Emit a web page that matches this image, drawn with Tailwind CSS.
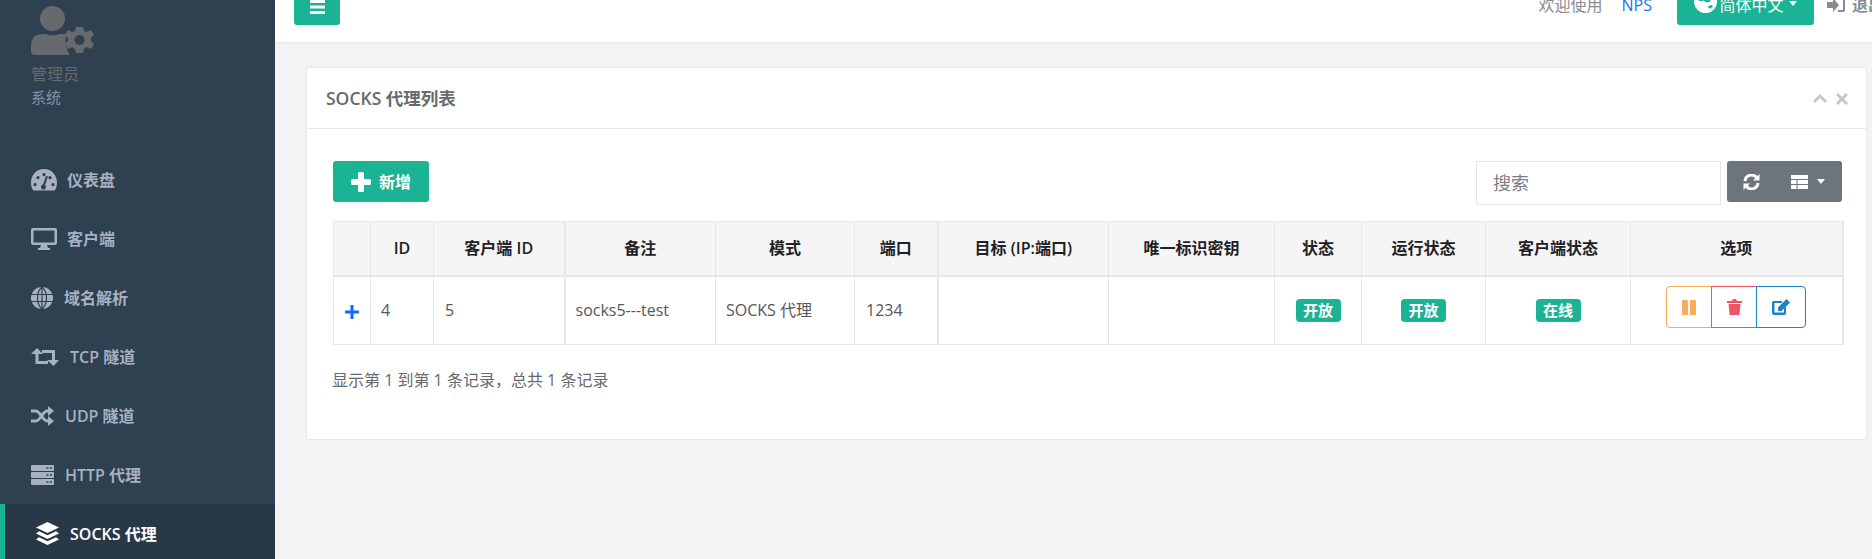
<!DOCTYPE html>
<html lang="zh-CN">
  <head>
    <meta charset="UTF-8" />
    <meta name="viewport" content="width=device-width, initial-scale=1.0" />
    <title>SOCKS 代理列表</title>
    <script src="https://cdn.jsdelivr.net/npm/@tailwindcss/browser@4"></script>
  </head>
  <body class="bg-[#f3f3f3] font-['Open_Sans','Noto_Sans_CJK_SC',sans-serif] text-[16px] text-[#676a6c]">
    <div class="flex h-[559px] overflow-hidden">
      <!-- Sidebar -->
      <aside class="w-[275px] shrink-0 bg-[#2f4050]">
        <div class="pl-[31px] pt-[6px] h-[150px]">
          <svg class="w-[63px] h-[50px]" viewBox="0 0 63 50" fill="#676a6c">
            <circle cx="21.5" cy="12.5" r="12.5" />
            <path d="M4 49q-4 0-4-4v-5q0-12 12-12h3q6 3 13 0h3q3 0 5 1-3 6 0 10l-1 1q1 5 4 9z" />
            <path fill-rule="evenodd" d="M47 19h7l1 4 3 1 4-2 3 5-3 3v3l3 3-3 5-4-2-3 2-1 4h-7l-1-4-3-2-4 2-3-5 3-3v-3l-3-3 3-5 4 2 3-1zM50.500 27a5 5 0 1 0 .01 0z" transform="translate(-2 2)" />
          </svg>
          <div class="mt-[7px] text-[16px] leading-[22px] text-[#676a6c]">管理员</div>
          <div class="mt-[2px] text-[15px] leading-[20px] text-[#8095a8]">系统</div>
        </div>
        <nav class="text-[16px] font-semibold text-[#a7b1c2]">
          <a class="flex items-center h-[59px] pl-[31px]">
            <svg class="w-[26px] h-[22px] mr-[10px]" viewBox="0 0 26 22" fill="#a7b1c2">
              <path fill-rule="evenodd" d="M13 0C5.500 0 0 6 0 13.500c0 3 .7 5.500 2 7.500q.4.600 1 .6h20q.6 0 1-.6c1.300-2 2-4.500 2-7.500C26 6 20.500 0 13 0zM4 14a1.600 1.600 0 1 0 .01 0zM7 7a1.600 1.600 0 1 0 .01 0zM13 4a1.600 1.600 0 1 0 .01 0zM19 7a1.600 1.600 0 1 0 .01 0zM22 14a1.600 1.600 0 1 0 .01 0zM15 7l-3 8.500a2.500 2.500 0 1 0 2 .5l3-8.500z" />
            </svg>
            <span>仪表盘</span>
          </a>
          <a class="flex items-center h-[59px] pl-[31px]">
            <svg class="w-[26px] h-[22px] mr-[10px]" viewBox="0 0 26 22" fill="#a7b1c2">
              <path fill-rule="evenodd" d="M2 0h22q2 0 2 2v13q0 2-2 2h-8l1 3h2v2H7v-2h2l1-3H2q-2 0-2-2V2q0-2 2-2zm.500 2.500v12h21v-12z" />
            </svg>
            <span>客户端</span>
          </a>
          <a class="flex items-center h-[59px] pl-[31px]">
            <svg class="w-[22px] h-[22px] mr-[11px]" viewBox="0 0 22 22">
              <circle cx="11" cy="11" r="11" fill="#a7b1c2" />
              <path d="M0 7.500h22M0 14.500h22M11 0v22M11 0C5 5 5 17 11 22M11 0c6 5 6 17 0 22" fill="none" stroke="#2f4050" stroke-width="1.200" />
            </svg>
            <span>域名解析</span>
          </a>
          <a class="flex items-center h-[59px] pl-[31px]">
            <svg class="w-[28px] h-[18px] mr-[11px]" viewBox="0 0 28 18" fill="none" stroke="#a7b1c2" stroke-width="3">
              <path d="M6 3v11.500h11M11 3.500h11.500V15" />
              <path d="M0 6l6-6 6 6zM16 12l6.500 6 5.500-6z" fill="#a7b1c2" stroke="none" />
            </svg>
            <span>TCP 隧道</span>
          </a>
          <a class="flex items-center h-[59px] pl-[31px]">
            <svg class="w-[23px] h-[20px] mr-[11px]" viewBox="0 0 23 20" fill="none" stroke="#a7b1c2" stroke-width="3">
              <path d="M0 5h5c4 0 7 10 11 10h2M0 15h5c4 0 7-10 11-10h2" />
              <path d="M17 0l6 5-6 5zM17 10l6 5-6 5z" fill="#a7b1c2" stroke="none" />
            </svg>
            <span>UDP 隧道</span>
          </a>
          <a class="flex items-center h-[59px] pl-[31px]">
            <svg class="w-[23px] h-[20px] mr-[11px]" viewBox="0 0 23 20">
              <path d="M1 0h21q1 0 1 1v4q0 1-1 1H1q-1 0-1-1V1q0-1 1-1zM1 7h21q1 0 1 1v4q0 1-1 1H1q-1 0-1-1V8q0-1 1-1zM1 14h21q1 0 1 1v4q0 1-1 1H1q-1 0-1-1v-4q0-1 1-1z" fill="#a7b1c2" />
              <path d="M15.500 3h2M19 3h2M15.500 10h2M19 10h2M15.500 17h2M19 17h2" stroke="#2f4050" stroke-width="1.500" />
            </svg>
            <span>HTTP 代理</span>
          </a>
          <a class="flex items-center h-[59px] pl-[31px] border-l-[5px] border-[#1ab394] bg-[#293846] text-white">
            <svg class="w-[23px] h-[23px] mr-[11px]" viewBox="0 0 23 23" fill="#fff">
              <path d="M11.500 0L23 5.500 11.500 11 0 5.500z" />
              <path d="M3 9.200l8.500 4 8.500-4 3 2.300-11.500 5.500L0 11.500z" />
              <path d="M3 15.200l8.500 4 8.500-4 3 2.300L11.500 23 0 17.500z" />
            </svg>
            <span>SOCKS 代理</span>
          </a>
        </nav>
      </aside>

      <!-- Main -->
      <main class="flex-1 min-w-0">
        <!-- Top bar, scrolled partly out of view -->
        <header class="h-[43px] bg-white border-b border-[#e7eaec] flex justify-between overflow-hidden">
          <button class="ml-[19px] w-[46px] h-[25px] bg-[#1ab394] rounded-b-[3px] flex items-start justify-center">
            <svg class="w-[15px] h-[14px] mt-[0px]" viewBox="0 0 15 14" fill="#fff"><path d="M0 0h15v3H0zM0 5.500h15v3H0zM0 11h15v3H0z" /></svg>
          </button>
          <div class="flex items-start h-[25px] text-[16px]">
            <span class="mt-[-6px] leading-[22px] text-[#8a8c8e]">欢迎使用</span>
            <span class="ml-[19px] mt-[-6px] leading-[22px] text-[#1c6ef2]">NPS</span>
            <button class="ml-[25px] w-[137px] h-[25px] bg-[#1ab394] rounded-b-[3px] flex items-start justify-center text-white">
              <svg class="w-[23px] h-[23px] mr-[2px] mt-[-10px] shrink-0" viewBox="0 0 22 22">
                <circle cx="11" cy="11" r="11" fill="#fff" />
                <path d="M3 9l5-3 3 2 3-1 2 4-4 1-3-2-3 1zM13 16l4-2 1 2-3 2z" fill="#1ab394" />
              </svg>
              <span class="mt-[-6px] leading-[22px]">简体中文</span>
              <span class="ml-[5px] mt-[1px] w-0 h-0 border-x-[4px] border-x-transparent border-t-[5px] border-t-white"></span>
            </button>
            <svg class="ml-[13px] mt-[-2px] w-[18px] h-[14px]" viewBox="0 0 18 14" fill="#8a8c8e">
              <path d="M0 4h6V0l6 7-6 7v-4H0z" />
              <path d="M11 0h5q2 0 2 2v10q0 2-2 2h-5v-2h4q1 0 1-1V3q0-1-1-1h-4z" />
            </svg>
            <span class="ml-[7px] w-[20px] overflow-hidden mt-[-6px] leading-[22px] font-bold text-[#8a8c8e] whitespace-nowrap">退出</span>
          </div>
        </header>

        <!-- Card -->
        <section class="mt-[24px] ml-[31px] mr-[5px] h-[373px] bg-white border border-[#e7eaec] rounded-[3px]">
          <div class="h-[61px] px-[19px] flex items-center justify-between border-b border-[#e7eaec]">
            <h5 class="text-[17.5px] font-semibold text-[#676a6c]">SOCKS 代理列表</h5>
            <div class="flex items-center gap-[9px] mr-[-1px] mt-[1px]">
              <svg class="w-[14px] h-[9px]" viewBox="0 0 14 9" fill="none" stroke="#c4c6c8" stroke-width="2.800"><path d="M1 8l6-6 6 6" /></svg>
              <svg class="w-[12px] h-[12px]" viewBox="0 0 12 12" fill="none" stroke="#c4c6c8" stroke-width="3"><path d="M1 1l10 10M11 1L1 11" /></svg>
            </div>
          </div>
          <div class="pl-[26px] pr-[24px] pt-[32px]">
            <div class="flex items-start justify-between h-[60px]">
              <button class="w-[96px] h-[41px] bg-[#1ab394] rounded-[3px] text-white flex items-center justify-center">
                <svg class="w-[20px] h-[20px] mr-[8px]" viewBox="0 0 20 20" fill="#fff"><path d="M7 1.500Q7 0 8.500 0h3Q13 0 13 1.500V7h5.500Q20 7 20 8.500v3q0 1.500-1.500 1.500H13v5.500q0 1.500-1.500 1.500h-3Q7 20 7 18.500V13H1.500Q0 13 0 11.500v-3Q0 7 1.500 7H7z" /></svg>
                <span class="font-semibold">新增</span>
              </button>
              <div class="flex items-start">
                <input class="w-[245px] h-[44px] px-[16px] border border-[#e5e6e7] text-[18px] outline-none placeholder:text-[#7b7e81]" placeholder="搜索" />
                <div class="ml-[6px] w-[115px] h-[41px] bg-[#6c757d] rounded-[3px] flex items-center text-white">
                  <svg class="ml-[16px] w-[17px] h-[16px]" viewBox="0 0 17 16" fill="none" stroke="#fff" stroke-width="3">
                    <path d="M2 7a6.500 6.500 0 0 1 11.500-3.500M15 9a6.500 6.500 0 0 1-11.500 3.500" />
                    <path d="M16.500 0v6.500H10zM.5 16V9.500H7z" fill="#fff" stroke="none" />
                  </svg>
                  <svg class="ml-[31px] w-[17px] h-[14px]" viewBox="0 0 17 14">
                    <path d="M0 0h17v14H0z" fill="#fff" />
                    <path d="M0 4.500h17M0 9.500h17M6 4.500V14" stroke="#6c757d" stroke-width="1" />
                  </svg>
                  <span class="ml-[9px] w-0 h-0 border-x-[4px] border-x-transparent border-t-[5px] border-t-white"></span>
                </div>
              </div>
            </div>

            <table class="w-[1509px] table-fixed border-collapse border border-[#e7e7e7] border-r-2 text-[#555759]">
              <colgroup>
                <col class="w-[37px]" /><col class="w-[63px]" /><col class="w-[131px]" /><col class="w-[151px]" />
                <col class="w-[139px]" /><col class="w-[83px]" /><col class="w-[171px]" /><col class="w-[166px]" />
                <col class="w-[87px]" /><col class="w-[124px]" /><col class="w-[145px]" /><col class="w-[212px]" />
              </colgroup>
              <thead class="bg-[#f5f5f5] text-[#1f2124]">
                <tr class="h-[54px] border-b-2 border-[#e7e7e7]">
                  <th class="border-r border-[#e7e7e7]"></th>
                  <th class="border-r border-[#e7e7e7] font-semibold">ID</th>
                  <th class="border-r-2 border-[#e7e7e7] font-semibold">客户端 ID</th>
                  <th class="border-r border-[#e7e7e7] font-semibold">备注</th>
                  <th class="border-r border-[#e7e7e7] font-semibold">模式</th>
                  <th class="border-r-2 border-[#e7e7e7] font-semibold">端口</th>
                  <th class="border-r border-[#e7e7e7] font-semibold">目标 (IP:端口)</th>
                  <th class="border-r border-[#e7e7e7] font-semibold">唯一标识密钥</th>
                  <th class="border-r border-[#e7e7e7] font-semibold">状态</th>
                  <th class="border-r border-[#e7e7e7] font-semibold">运行状态</th>
                  <th class="border-r border-[#e7e7e7] font-semibold">客户端状态</th>
                  <th class="font-semibold">选项</th>
                </tr>
              </thead>
              <tbody>
                <tr class="h-[69px]">
                  <td class="border-r border-[#e7e7e7] text-center">
                    <svg class="inline-block w-[14px] h-[14px]" viewBox="0 0 14 14" fill="#0d6efd"><path d="M5.500 0h3v5.500H14v3H8.500V14h-3V8.500H0v-3h5.500z" /></svg>
                  </td>
                  <td class="border-r border-[#e7e7e7] px-[10px]">4</td>
                  <td class="border-r-2 border-[#e7e7e7] px-[11px]">5</td>
                  <td class="border-r border-[#e7e7e7] px-[10px]">socks5---test</td>
                  <td class="border-r border-[#e7e7e7] px-[10px]">SOCKS 代理</td>
                  <td class="border-r-2 border-[#e7e7e7] px-[11px]">1234</td>
                  <td class="border-r border-[#e7e7e7]"></td>
                  <td class="border-r border-[#e7e7e7]"></td>
                  <td class="border-r border-[#e7e7e7] text-center"><span class="inline-block w-[45px] h-[23px] text-[15px] leading-[23px] rounded-[4px] bg-[#1ab394] text-white font-bold">开放</span></td>
                  <td class="border-r border-[#e7e7e7] text-center"><span class="inline-block w-[45px] h-[23px] text-[15px] leading-[23px] rounded-[4px] bg-[#1ab394] text-white font-bold">开放</span></td>
                  <td class="border-r border-[#e7e7e7] text-center"><span class="inline-block w-[45px] h-[23px] text-[15px] leading-[23px] rounded-[4px] bg-[#1ab394] text-white font-bold">在线</span></td>
                  <td>
                    <div class="ml-[35px] mb-[6px] flex h-[42px] w-[141px]">
                      <button class="w-[46px] border border-[#f8ac59] rounded-l-[4px] flex items-center justify-center">
                        <svg class="w-[14px] h-[15px]" viewBox="0 0 14 15" fill="#f8ac59"><rect width="6" height="15" rx="1" /><rect x="8" width="6" height="15" rx="1" /></svg>
                      </button>
                      <button class="w-[46px] ml-[-1px] border border-[#ed5565] flex items-center justify-center">
                        <svg class="w-[15px] h-[16px]" viewBox="0 0 15 16" fill="#ed5565"><path d="M0 2h5l1-2h3l1 2h5v2H0zM1.500 5h12l-1 10q0 1-1 1h-8q-1 0-1-1z" /></svg>
                      </button>
                      <button class="w-[50px] ml-[-1px] border border-[#1c84c6] rounded-r-[4px] flex items-center justify-center">
                        <svg class="w-[18px] h-[16px]" viewBox="0 0 18 16" fill="#1c84c6"><path d="M1.500 2H10v2H2.500v9.500H12V9l2-2v7q0 2-2 2H2q-2 0-2-2V4q0-2 1.500-2z" /><path d="M14.500 0L18 3.500 9.500 12H6V8.500z" /></svg>
                      </button>
                    </div>
                  </td>
                </tr>
              </tbody>
            </table>
            <p class="mt-[24px] ml-[-1px] text-[16px] leading-[22px] text-[#676a6c]">显示第 1 到第 1 条记录，总共 1 条记录</p>
          </div>
        </section>
      </main>
    </div>
  </body>
</html>
